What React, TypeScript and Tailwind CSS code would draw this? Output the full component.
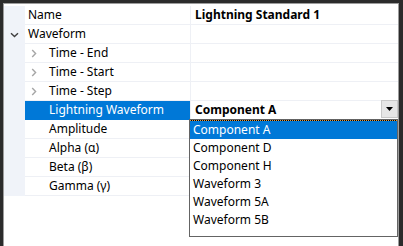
type Row = {
  name: string;
  indent: 0 | 1;
  expander?: 'down' | 'right';
  value?: string;
  selected?: boolean;
};

const rows: Row[] = [
  { name: 'Name', indent: 0, value: 'Lightning Standard 1' },
  { name: 'Waveform', indent: 0, expander: 'down' },
  { name: 'Time - End', indent: 1, expander: 'right' },
  { name: 'Time - Start', indent: 1, expander: 'right' },
  { name: 'Time - Step', indent: 1, expander: 'right' },
  { name: 'Lightning Waveform', indent: 1, selected: true },
  { name: 'Amplitude', indent: 1 },
  { name: 'Alpha (α)', indent: 1 },
  { name: 'Beta (β)', indent: 1 },
  { name: 'Gamma (γ)', indent: 1 },
];

const options = ['Component A', 'Component D', 'Component H', 'Waveform 3', 'Waveform 5A', 'Waveform 5B'];

function ChevronDown() {
  return (
    <svg width="9" height="6" viewBox="0 0 9 6" className="block">
      <path d="M1 1.2 L4.5 4.6 L8 1.2" fill="none" stroke="#404040" strokeWidth="1.4" />
    </svg>
  );
}

function ChevronRight() {
  return (
    <svg width="6" height="9" viewBox="0 0 6 9" className="block">
      <path d="M1.2 1 L4.6 4.5 L1.2 8" fill="none" stroke="#a6a6a6" strokeWidth="1.4" />
    </svg>
  );
}

function ValueCell({ row }: { row: Row }) {
  if (row.selected) {
    return (
      <div className="flex h-full items-stretch bg-white font-bold text-black">
        <span className="flex flex-1 items-center pl-[4px]">Component A</span>
        <div className="-mt-px flex h-[18px] w-[17px] items-center justify-center border border-[#c8c8c8] bg-[#e6e6e6]">
          <svg width="7" height="4" viewBox="0 0 7 4" className="block">
            <path d="M0 0 H7 L3.5 4 Z" fill="#000" />
          </svg>
        </div>
      </div>
    );
  }
  return <div className="flex h-full items-center pl-[4px] font-bold text-black">{row.value}</div>;
}

export default function App() {
  return (
    <div
      className="relative h-[246px] w-[403px] overflow-hidden bg-[#2b2b2b] pl-[3px] pr-[4px] pt-[3px] text-[12px] leading-none"
      style={{ fontFamily: '"Noto Sans", "Open Sans", sans-serif' }}
    >
      <div className="h-full border-l border-r border-t border-[#9c9c9c] bg-white pt-[2px]">
        {rows.map((row) => (
          <div key={row.name} className="flex h-[19px]">
            <div className="flex w-[21px] shrink-0 items-center bg-[#f0f3f9] pl-[6px]">
              {row.expander === 'down' && <ChevronDown />}
            </div>
            <div
              className={`flex w-[165px] shrink-0 items-center border-b ${
                row.selected ? 'border-[#0078d7] bg-[#0078d7] text-white' : 'border-[#eef0f5] text-black'
              } ${row.indent === 1 ? '' : 'pl-[3px]'}`}
            >
              {row.indent === 1 && (
                <span className="flex w-[24px] shrink-0 items-center pl-[6px]">
                  {row.expander === 'right' && <ChevronRight />}
                </span>
              )}
              {row.name}
            </div>
            <div className="flex-1 border-b border-l border-[#eef0f5]">
              <ValueCell row={row} />
            </div>
          </div>
        ))}
      </div>

      <div className="absolute left-[189px] top-[119px] h-[118px] w-[209px] border border-[#646464] bg-white text-black">
        <div className="h-px bg-[repeating-linear-gradient(90deg,#e89a3c_0_1px,#000_1px_2px)]" />
        {options.map((opt, i) => (
          <div
            key={opt}
            className={`flex h-[18px] items-center pl-[3px] ${i === 0 ? 'bg-[#0078d7] text-white' : ''}`}
          >
            {opt}
          </div>
        ))}
      </div>
    </div>
  );
}
